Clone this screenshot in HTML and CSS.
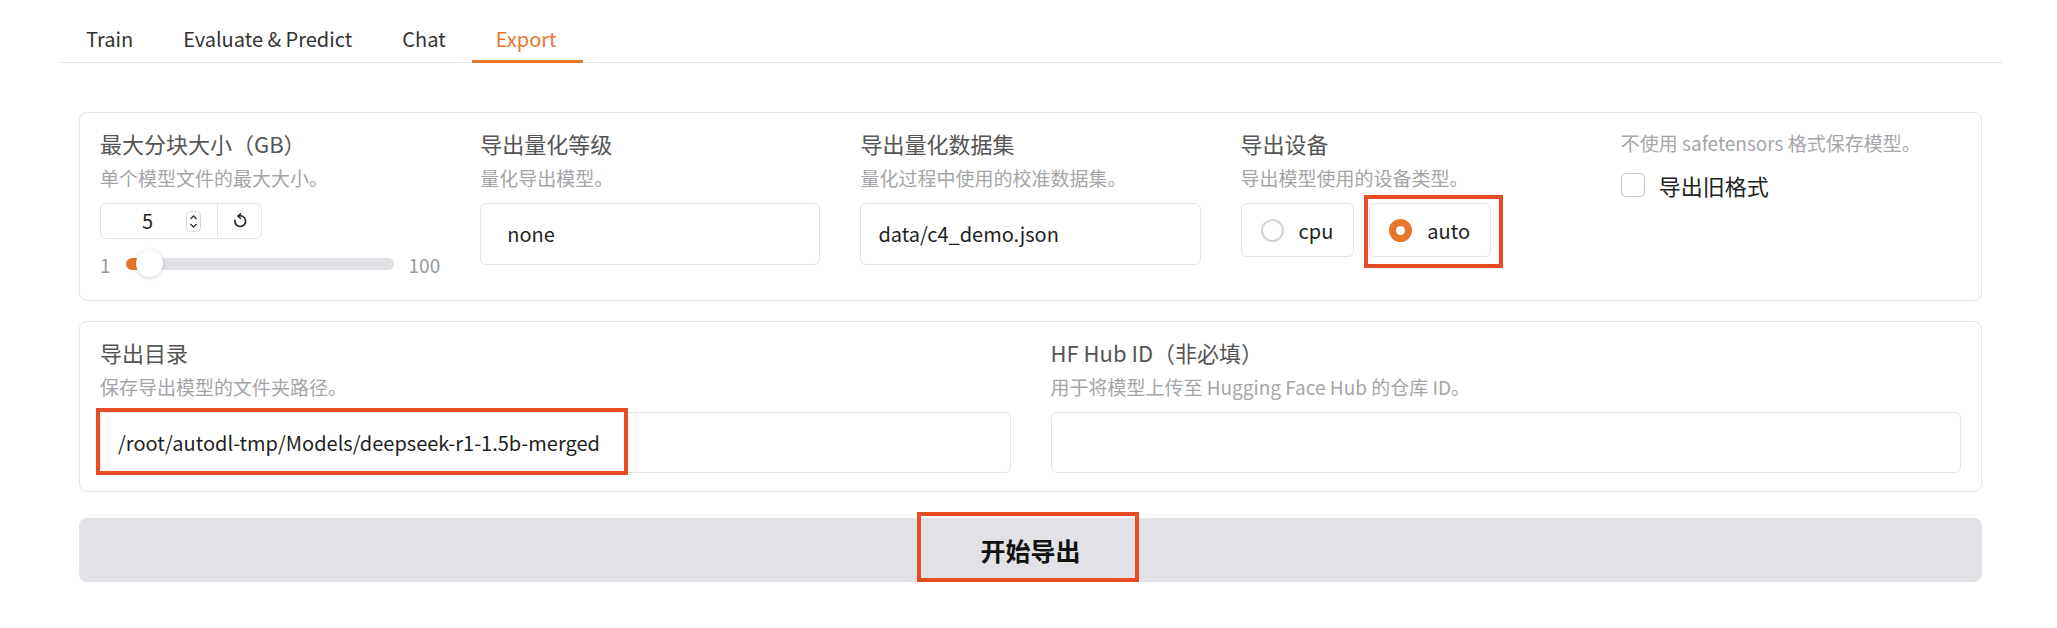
FILE: index.html
```html
<!DOCTYPE html>
<html lang="zh-CN">
<head>
<meta charset="UTF-8">
<meta name="viewport" content="width=device-width, initial-scale=1.0">
<title>Export</title>
<link rel="stylesheet" href="styles.css">
</head>
<body>

<div class="page">
    <div class="tab-nav">
        <button class="tab">Train</button>
        <button class="tab">Evaluate &amp; Predict</button>
        <button class="tab">Chat</button>
        <button class="tab selected">Export</button>
    </div>

    <div class="panel">
        <div class="card grid-5">
            <div class="field">
                <div class="label">最大分块大小（GB）</div>
                <div class="info">单个模型文件的最大大小。</div>
                <div class="number-box">
                    <span class="num">5</span>
                    <span class="spin">
                        <svg width="15" height="21" viewBox="0 0 15 21">
                            <rect x="0.5" y="0.5" width="14" height="20" rx="4" fill="#fff" stroke="#d8d8dc"/>
                            <polyline points="4.5,8 7.5,5 10.5,8" fill="none" stroke="#333" stroke-width="1.4"/>
                            <polyline points="4.5,13 7.5,16 10.5,13" fill="none" stroke="#333" stroke-width="1.4"/>
                        </svg>
                    </span>
                    <span class="reset">
                        <svg width="16" height="16" viewBox="0 0 16 16">
                            <path d="M6.2 3.1 A5.4 5.4 0 1 1 2.9 7.2" fill="none" stroke="#222" stroke-width="1.6" stroke-linecap="round"/>
                            <polyline points="8.4,0.9 6.2,3.1 8.4,5.3" fill="none" stroke="#222" stroke-width="1.6" stroke-linecap="round" stroke-linejoin="round"/>
                        </svg>
                    </span>
                </div>
                <div class="slider">
                    <span class="bound">1</span>
                    <div class="track">
                        <div class="fill"></div>
                        <div class="thumb"></div>
                    </div>
                    <span class="bound">100</span>
                </div>
            </div>

            <div class="field">
                <div class="label">导出量化等级</div>
                <div class="info">量化导出模型。</div>
                <div class="textbox dropdown">none</div>
            </div>

            <div class="field">
                <div class="label">导出量化数据集</div>
                <div class="info">量化过程中使用的校准数据集。</div>
                <div class="textbox">data/c4_demo.json</div>
            </div>

            <div class="field">
                <div class="label">导出设备</div>
                <div class="info">导出模型使用的设备类型。</div>
                <div class="radio-group">
                    <label class="radio-item"><span class="dot"></span>cpu</label>
                    <label class="radio-item checked"><span class="dot"></span>auto<span class="mark mark-radio"></span></label>
                </div>
            </div>

            <div class="field">
                <div class="info top-info">不使用 safetensors 格式保存模型。</div>
                <label class="checkbox"><span class="box"></span>导出旧格式</label>
            </div>
        </div>

        <div class="card grid-2">
            <div class="field">
                <div class="label">导出目录</div>
                <div class="info">保存导出模型的文件夹路径。</div>
                <div class="textbox short">/root/autodl-tmp/Models/deepseek-r1-1.5b-merged<span class="mark mark-path"></span></div>
            </div>
            <div class="field">
                <div class="label">HF Hub ID（非必填）</div>
                <div class="info">用于将模型上传至 Hugging Face Hub 的仓库 ID。</div>
                <div class="textbox short"></div>
            </div>
        </div>

        <button class="run-btn">开始导出<span class="mark mark-btn"></span></button>
    </div>
</div>

</body>
</html>
```

FILE: styles.css
```css
body {
    margin: 0;
    background: #fff;
    color: #1f1f1f;
    font-family: "Noto Sans CJK SC", Lato, sans-serif;
}
.page {
    margin-left: 61px;
    width: 1941px;
}
.tab-nav {
    display: flex;
    padding-top: 14px;
    padding-left: 1px;
    border-bottom: 1px solid #e4e4e7;
}
.tab {
    height: 49px;
    margin-bottom: -1px;
    padding: 2px 26px 0 24px;
    border: 0;
    border-bottom: 3px solid transparent;
    background: none;
    font-family: inherit;
    font-size: 20px;
    color: #333;
}
.tab.selected {
    color: #e8772e;
    border-bottom-color: #e8772e;
}
.panel {
    padding: 49px 20px 0 18px;
}
.card {
    display: grid;
    column-gap: 40px;
    border: 1px solid #e4e4e7;
    border-radius: 8px;
    padding: 15px 20px 18px;
    margin-bottom: 20px;
}
.grid-5 {
    grid-template-columns: repeat(5, 1fr);
    padding-bottom: 21px;
}
.grid-2 {
    grid-template-columns: repeat(2, 1fr);
}
.label {
    font-size: 22px;
    line-height: 30px;
    color: #555;
}
.info {
    margin-top: 5px;
    margin-bottom: 10px;
    font-size: 19px;
    line-height: 30px;
    color: #a5a5a8;
}
.top-info {
    margin-top: 0;
    margin-bottom: 11px;
}

/* slider number box */
.number-box {
    display: flex;
    width: 162px;
    height: 36px;
    box-sizing: border-box;
    border: 1px solid #e4e4e7;
    border-radius: 6px;
}
.num {
    flex: 1;
    padding-left: 8px;
    text-align: center;
    font-size: 20px;
    line-height: 34px;
}
.spin {
    display: flex;
    align-items: center;
    margin-right: 16px;
}
.reset {
    display: flex;
    align-items: center;
    justify-content: center;
    width: 43px;
    border-left: 1px solid #e4e4e7;
}
.slider {
    display: flex;
    align-items: center;
    gap: 15px;
    height: 30px;
    margin-top: 10px;
}
.bound {
    font-size: 19px;
    color: #9a9a9e;
}
.track {
    position: relative;
    flex: 1;
    height: 12px;
    border-radius: 6px;
    background: #e2e2e6;
}
.fill {
    width: 26px;
    height: 12px;
    border-radius: 6px 0 0 6px;
    background: #e8772e;
}
.thumb {
    position: absolute;
    left: 10px;
    top: -8px;
    width: 27px;
    height: 27px;
    border-radius: 50%;
    background: #fff;
    box-shadow: 0 1px 4px rgba(0, 0, 0, 0.18);
}

/* text inputs */
.textbox {
    position: relative;
    height: 62px;
    box-sizing: border-box;
    padding: 0 17px;
    border: 1px solid #e4e4e7;
    border-radius: 6px;
    font-size: 20px;
    line-height: 60px;
}
.dropdown {
    padding-left: 26px;
}
.short {
    height: 61px;
    line-height: 59px;
}

/* radios */
.radio-group {
    display: flex;
    gap: 15px;
}
.radio-item {
    position: relative;
    display: flex;
    align-items: center;
    gap: 15px;
    height: 54px;
    box-sizing: border-box;
    padding: 0 20px 0 19px;
    border: 1px solid #e4e4e7;
    border-radius: 6px;
    font-size: 20px;
}
.dot {
    width: 23px;
    height: 23px;
    box-sizing: border-box;
    border: 2px solid #d4d4d8;
    border-radius: 50%;
    background: #fff;
}
.checked .dot {
    border: 7px solid #e8772e;
}
.checkbox {
    display: flex;
    align-items: center;
    gap: 14px;
    font-size: 22px;
    color: #222;
}
.box {
    width: 24px;
    height: 24px;
    box-sizing: border-box;
    border: 1px solid #c8c8cc;
    border-radius: 5px;
}

.run-btn {
    position: relative;
    display: block;
    width: 100%;
    height: 64px;
    margin-top: 26px;
    border: 0;
    border-radius: 8px;
    background: #e2e2e6;
    font-family: inherit;
    font-size: 25px;
    font-weight: bold;
    color: #111;
}

/* red highlight frames */
.mark {
    position: absolute;
    border: 4px solid #e84c22;
    pointer-events: none;
}
.mark-radio {
    top: -9px;
    right: -13px;
    bottom: -12px;
    left: -6px;
}
.mark-path {
    top: -5px;
    left: -5px;
    width: 524px;
    height: 59px;
}
.mark-btn {
    top: -6px;
    left: 50%;
    width: 214px;
    height: 62px;
    margin-left: -114px;
}
```
